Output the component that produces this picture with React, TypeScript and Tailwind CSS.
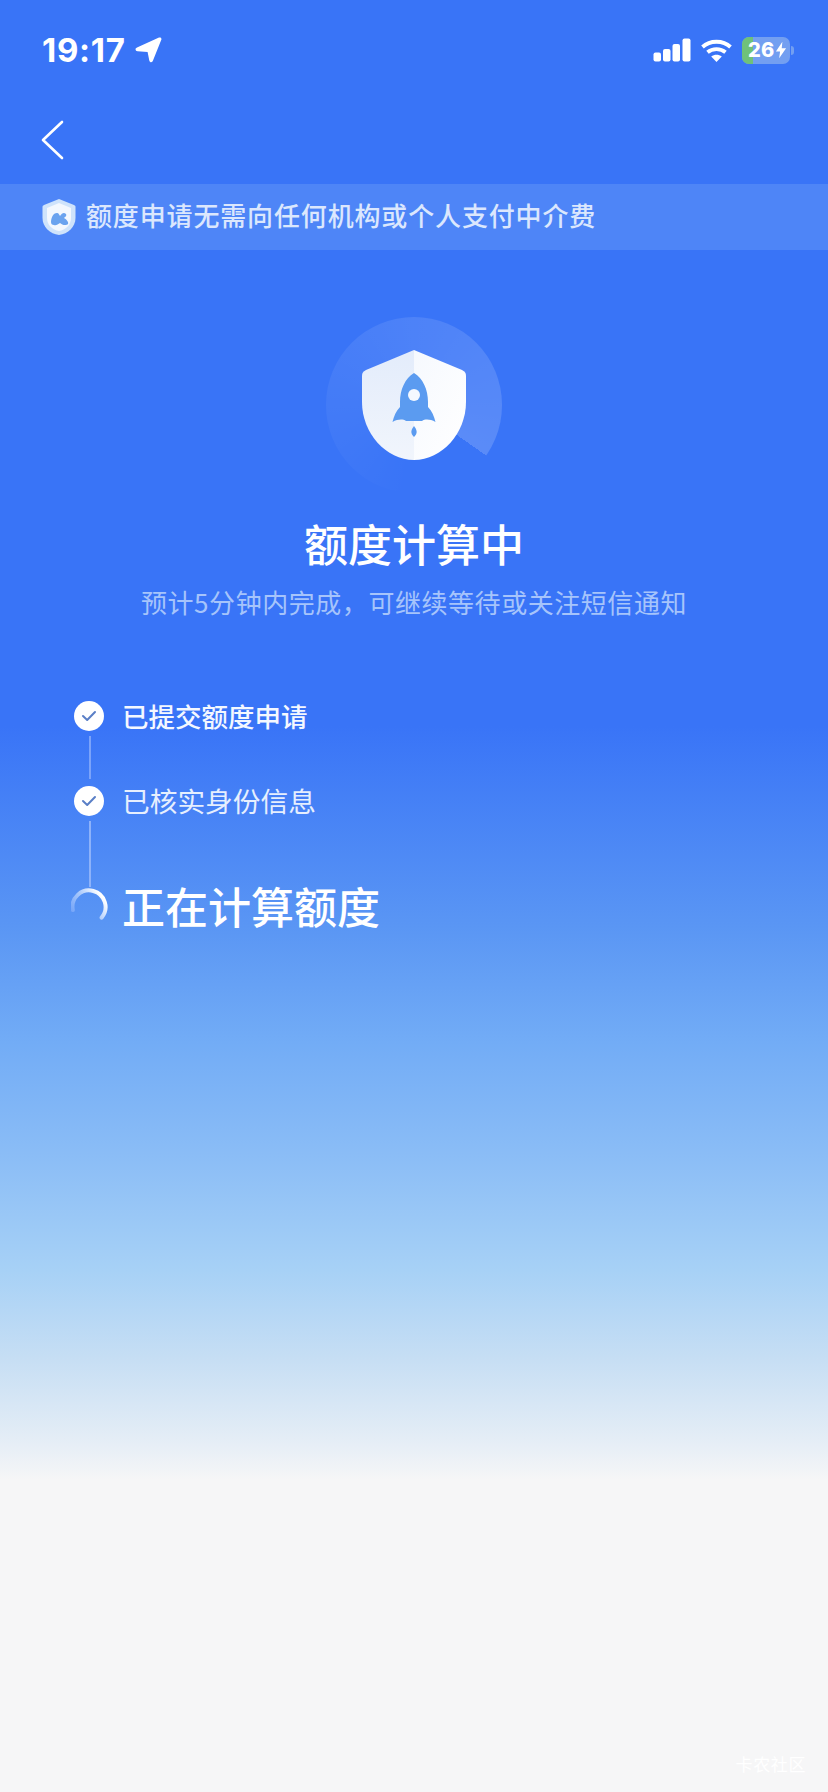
const font = { fontFamily: '"Noto Sans CJK SC", "Noto Sans", sans-serif' };

function Check() {
  return (
    <div className="w-[30px] h-[30px] rounded-full bg-white flex items-center justify-center shrink-0">
      <svg width="16" height="12" viewBox="0 0 16 12" fill="none">
        <path d="M2 6 L6.2 10 L14 2" stroke="#5a7fc6" strokeWidth="2" strokeLinecap="round" strokeLinejoin="round" />
      </svg>
    </div>
  );
}

function StatusBar() {
  return (
    <div className="h-[92px] pl-[42px] pr-[34px] pt-[33px] flex items-start justify-between text-white">
      <div className="flex items-center gap-[9px] h-[34px]">
        <span className="text-[33px] font-bold leading-none tracking-[0.7px]" style={{ fontFamily: '"Inter", sans-serif' }}>19:17</span>
        <svg width="27" height="26" viewBox="0 0 27 26" fill="white">
          <path d="M24 .6 C25.8 .1 26.9 1.2 26.3 2.8 L18 23.6 C17.2 25.8 14.8 25.6 14.3 23.4 L12.6 15 L2.6 14.2 C.2 14 -.2 11.6 2 10.6 Z" />
        </svg>
      </div>
      <div className="flex items-center h-[34px]">
        <svg width="38" height="24" viewBox="0 0 38 24" fill="white">
          <rect x="0.5" y="14.5" width="7.5" height="9" rx="2" />
          <rect x="10" y="11" width="7.5" height="12.5" rx="2" />
          <rect x="19.5" y="6" width="7.5" height="17.5" rx="2" />
          <rect x="29.5" y="0.5" width="8" height="23" rx="2" />
        </svg>
        <svg className="ml-[10px]" width="31" height="23" viewBox="0 0 31 23" fill="none" stroke="white" strokeWidth="3.8">
          <path d="M1.5 8 C9 1 22 1 29.5 8" />
          <path d="M6.5 13.2 C11.5 9 19.5 9 24.5 13.2" />
          <path d="M15.5 23 L10.2 17.4 C13.4 15.2 17.6 15.2 20.8 17.4 Z" fill="white" stroke="none" />
        </svg>
        <div className="relative ml-[10px] w-[48px] h-[27px] rounded-[7px] overflow-hidden bg-[#739ff1] flex items-center pl-[6px]">
          <div className="absolute left-0 top-0 bottom-0 w-[11px] bg-[#6fc17a]" />
          <span className="relative text-[20px] font-extrabold leading-none tracking-[0.2px] text-white" style={{ fontFamily: '"Inter", sans-serif' }}>26</span>
          <svg className="relative ml-[1px] shrink-0" width="12" height="18" viewBox="0 0 13 18" fill="white">
            <path d="M8 0 L1 10.5 H5.5 L4.5 18 L12 7 H7.3 Z" />
          </svg>
        </div>
        <div className="ml-[1px] w-[3px] h-[9px] rounded-r-[3px] bg-[#739ff1]" />
      </div>
    </div>
  );
}

function Rocket() {
  return (
    <div className="relative w-[176px] h-[176px] rounded-full bg-[conic-gradient(from_125deg,transparent_0deg,transparent_60deg,rgba(255,255,255,0.05)_145deg,rgba(255,255,255,0.1)_235deg,rgba(255,255,255,0.17)_360deg)]">
      <svg className="absolute inset-0" width="176" height="176" viewBox="0 0 176 176">
        <defs>
          <linearGradient id="shieldL" x1="0" y1="0" x2="0" y2="1">
            <stop offset="0" stopColor="#e3ecfb" />
            <stop offset="1" stopColor="#f1f5fc" />
          </linearGradient>
          <linearGradient id="shieldR" x1="0" y1="0" x2="1" y2="1">
            <stop offset="0" stopColor="#f6f9fe" />
            <stop offset="1" stopColor="#ffffff" />
          </linearGradient>
        </defs>
        <g transform="translate(0,-2)">
          <path d="M88 35 L40 55 C37 56.5 36 58 36 61 L36 87 C36 118 60 145 88 145 Z" fill="url(#shieldL)" />
          <path d="M88 35 L136 55 C139 56.5 140 58 140 61 L140 87 C140 118 116 145 88 145 Z" fill="url(#shieldR)" />
          <path d="M88 58 C97 63 102 75 102 87 L102 92 C106 96 108 101 109.5 107 C104 104 99 104 96 106 L80 106 C77 104 72 104 66.5 107 C68 101 70 96 74 92 L74 87 C74 75 79 63 88 58 Z" fill="#5b9bf0" />
          <circle cx="88" cy="80" r="6" fill="#f4f8ff" />
          <path d="M88 111 C91 115 92 118 88 122 C84 118 85 115 88 111 Z" fill="#5b9bf0" />
        </g>
      </svg>
    </div>
  );
}

export default function App() {
  return (
    <div
      className="w-[828px] h-[1792px] overflow-hidden text-white flex flex-col bg-[linear-gradient(to_bottom,#3974f7_0,#3974f7_726px,#5a96f4_927px,#72acf6_1042px,#8bbdf6_1157px,#a7d1f6_1271px,#c6def4_1358px,#e6eef6_1444px,#f6f6f7_1480px,#f6f6f7_100%)]"
      style={font}
    >
      <StatusBar />
      <div className="h-[92px] pl-[40px] flex items-start pt-[28px]">
        <svg width="24" height="40" viewBox="0 0 24 40" fill="none" stroke="white" strokeWidth="2.6">
          <path d="M22 2 L3 20 L22 38" strokeLinecap="round" strokeLinejoin="round" />
        </svg>
      </div>
      <div className="h-[66px] bg-[#4e85f7] flex items-center pl-[42px] gap-[10px]">
        <svg width="34" height="38" viewBox="0 0 34 38">
          <path d="M17 1 L32 7 C33 7.5 33.5 8 33.5 9 L33.5 20 C33.5 29 26 36 17 37 C8 36 .5 29 .5 20 L.5 9 C.5 8 1 7.5 2 7 Z" fill="#cfe3fb" />
          <path d="M17 5 L29 10 L29 20 C29 27 23.5 32 17 33 C10.5 32 5 27 5 20 L5 10 Z" fill="#f4f8fe" />
          <path d="M9 24 C9 20 11 15 15 15 C17 15 17 17 18 18 C20 15 22 14 24 16 C25 18 23 19 22 20 C24 21 27 24 26 26 C24 28 20 27 18 25 C16 26 14 28 12 27 C10 27 9 26 9 24 Z" fill="#6ba3ef" />
        </svg>
        <span className="text-[26px] font-medium leading-none tracking-[0.85px] text-[#dbe7fd] pb-[4px]">额度申请无需向任何机构或个人支付中介费</span>
      </div>
      <div className="flex flex-col items-center pt-[67px]">
        <Rocket />
        <h1 className="mt-[18px] text-[44px] leading-[64px] font-medium">额度计算中</h1>
        <p className="mt-[8px] text-[26px] leading-[38px] tracking-[0.55px] text-[#a6c4fb]">预计5分钟内完成，可继续等待或关注短信通知</p>
      </div>
      <div className="pl-[74px] pt-[77px] flex flex-col">
        <div className="flex items-center h-[36px] gap-[18px]">
          <Check />
          <span className="text-[26.5px] font-medium leading-none text-[#f4f8ff]">已提交额度申请</span>
        </div>
        <div className="w-[2px] h-[43px] ml-[15px] mt-[2px] bg-[#7ba3fa]" />
        <div className="flex items-center h-[36px] gap-[18px] mt-[4px]">
          <Check />
          <span className="text-[27.7px] leading-none text-[#e6effe]">已核实身份信息</span>
        </div>
        <div className="w-[2px] h-[66px] ml-[15px] mt-[2px] bg-[#8db2fa]" />
        <div className="flex items-center gap-[14px] -ml-[3px] -mt-[12px]">
          <svg width="37" height="37" viewBox="0 0 37 37" fill="none">
            <defs>
              <linearGradient id="spin" x1="0" y1="1" x2="1" y2="0.4">
                <stop offset="0" stopColor="#6d9ff8" />
                <stop offset="0.55" stopColor="#a8c8fb" />
                <stop offset="1" stopColor="#ffffff" />
              </linearGradient>
            </defs>
            <path d="M1.8 23 A16.5 16.5 0 1 1 30.6 30.6" stroke="url(#spin)" strokeWidth="4" strokeLinecap="round" />
          </svg>
          <span className="text-[43px] font-medium leading-[60px] text-white">正在计算额度</span>
        </div>
      </div>
      <div className="mt-auto pb-[20px] pr-[22px] flex justify-end">
        <span className="text-[17px] leading-none text-white tracking-[0.6px]">卡农社区</span>
      </div>
    </div>
  );
}
